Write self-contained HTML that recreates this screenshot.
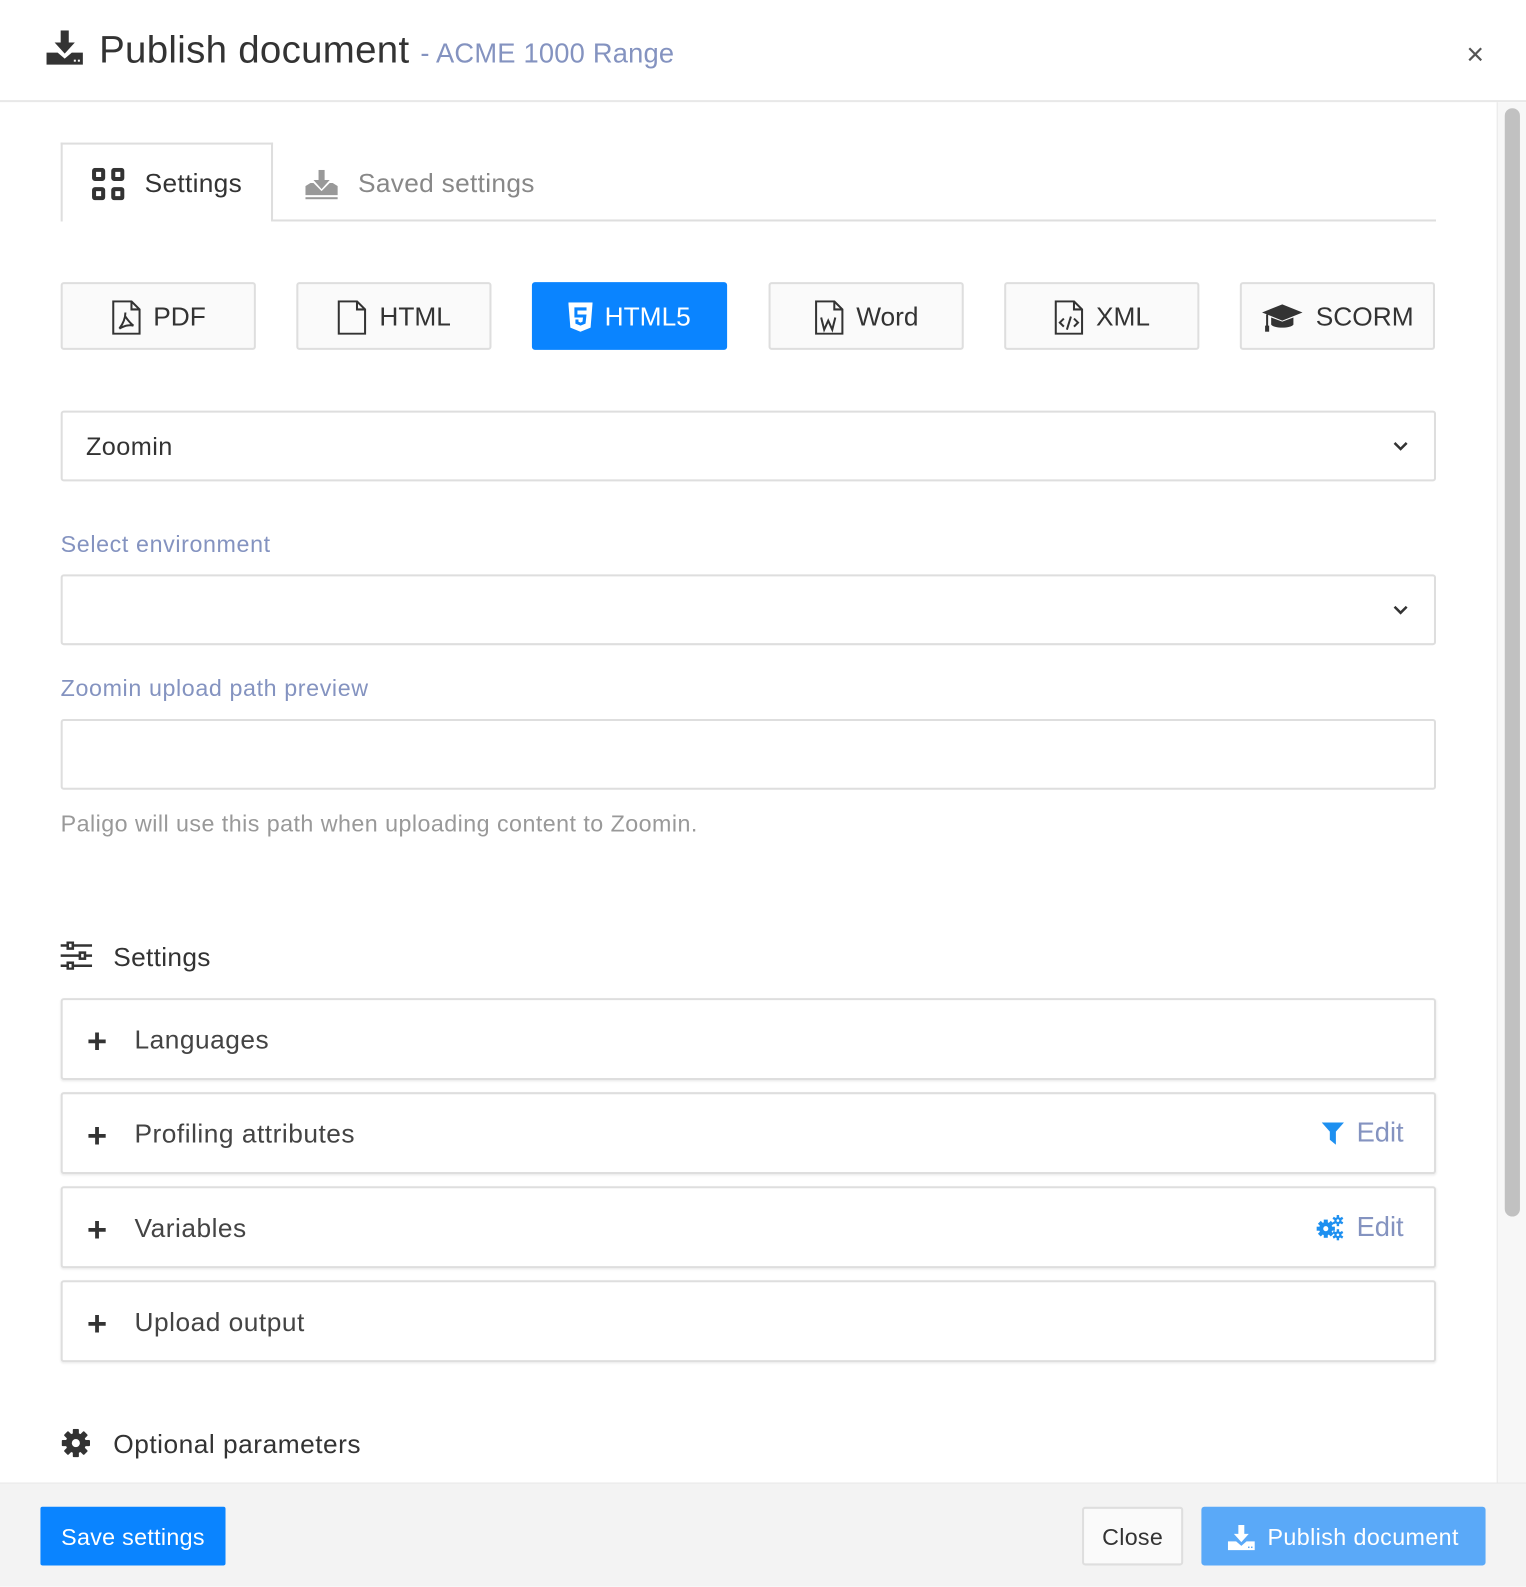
<!DOCTYPE html>
<html><head><meta charset="utf-8"><style>
html,body{margin:0;padding:0;background:#fff;overflow:hidden;width:1526px;height:1586px}
#w{position:absolute;left:0;top:0;width:1509px;height:1568px;transform:scale(1.01127);transform-origin:0 0;font-family:"Liberation Sans",sans-serif;color:#333}
.a{position:absolute}
.box{position:absolute;border:2px solid #dedede;border-radius:3px;box-sizing:border-box;background:#fff}
.fb{position:absolute;top:279px;width:193px;height:67px;border:2px solid #dedede;border-radius:3px;box-sizing:border-box;background:#fafafa;display:flex;align-items:center;justify-content:center;font-size:26px;color:#333;gap:12px;padding-top:2px}
.lbl{position:absolute;left:60px;font-size:23px;color:#8493c0;letter-spacing:.6px}
.acc{position:absolute;left:60px;width:1360px;height:81px;border:2px solid #dedede;border-radius:3px;box-sizing:border-box;box-shadow:0 1px 2px rgba(0,0,0,.08)}
.acc .p{position:absolute;left:24px;top:24px;font-size:34px;line-height:34px;font-weight:bold;color:#333}
.acc .t{position:absolute;left:71px;top:24px;font-size:26px;color:#444;letter-spacing:.5px}
.edit{position:absolute;right:30px;top:23px;font-size:27px;color:#8493c0;display:flex;align-items:center;gap:12px}
</style></head><body><div id="w">
<svg class="a" style="left:46px;top:30px" width="36" height="34" viewBox="0 0 36 34"><path d="M14 0h8v12h6l-10 11-10-11h6z" fill="#333"/><path d="M0 22h11l7 6 7-6h11v12H0z" fill="#333"/><rect x="27" y="29" width="2" height="2" fill="#fff"/><rect x="31" y="29" width="2" height="2" fill="#fff"/></svg>
<div class="a" style="left:98px;top:29px;font-size:38px;color:#333;white-space:nowrap;letter-spacing:.3px">Publish document <span style="font-size:27px;color:#8493c0;letter-spacing:.2px">- ACME 1000 Range</span></div>
<div class="a" style="left:1450px;top:38px;font-size:30px;color:#555">×</div>
<div class="a" style="left:0;top:99px;width:1509px;height:2px;background:#e8e8e8"></div>
<div class="a" style="left:1480px;top:101px;width:29px;height:1365px;background:#f7f7f7;border-left:1px solid #e8e8e8"></div>
<div class="a" style="left:1488px;top:107px;width:15px;height:1096px;background:#c1c1c1;border-radius:8px"></div>
<div class="a" style="left:269px;top:217px;width:1151px;height:2px;background:#dedede"></div>
<div class="a" style="left:60px;top:141px;width:210px;height:78px;border:2px solid #dedede;border-bottom:none;box-sizing:border-box;background:#fff"></div>
<svg class="a" style="left:91px;top:166px" width="32" height="32" viewBox="0 0 32 32" fill="none" stroke="#333" stroke-width="4"><rect x="2" y="2" width="9" height="9" rx="1"/><rect x="21" y="2" width="9" height="9" rx="1"/><rect x="2" y="21" width="9" height="9" rx="1"/><rect x="21" y="21" width="9" height="9" rx="1"/></svg>
<div class="a" style="left:143px;top:166px;font-size:26px;color:#333;letter-spacing:.3px">Settings</div>
<svg class="a" style="left:302px;top:168px" width="32" height="30" viewBox="0 0 32 30" fill="#999"><path d="M13 0h6v10h5l-8 9-8-9h5z"/><path d="M0 16l5-3h3l8 8 8-8h3l5 3v9H0z"/><rect x="0" y="27" width="32" height="2"/></svg>
<div class="a" style="left:354px;top:166px;font-size:26px;color:#888;letter-spacing:.3px">Saved settings</div>
<div class="fb" style="left:60px"><svg width="30" height="34" viewBox="0 0 30 34" fill="none" stroke="#333" stroke-width="2"><path d="M2 1h18l8 8v24H2z"/><path d="M20 1v8h8"/><path d="M8 28c3-4 6-10 6-16M8 28c5-3 10-4 14-3M14 16c2 3 4 6 8 9"/></svg><span>PDF</span></div>
<div class="fb" style="left:293px"><svg width="30" height="34" viewBox="0 0 30 34" fill="none" stroke="#333" stroke-width="2"><path d="M2 1h18l8 8v24H2z"/><path d="M20 1v8h8"/></svg><span>HTML</span></div>
<div class="fb" style="left:526px;background:#0a84ff;border-color:#0a84ff;color:#fff"><svg width="24" height="30" viewBox="0 0 24 30"><path d="M0 0h24l-2 25-10 4-10-4z" fill="#fff"/><path d="M6 5h12v3H9v4h9l-1 9-5 2-5-2v-4h3v2l2 1 2-1 .5-4H6z" fill="#0a84ff"/></svg><span>HTML5</span></div>
<div class="fb" style="left:760px"><svg width="30" height="34" viewBox="0 0 30 34" fill="none" stroke="#333" stroke-width="2"><path d="M2 1h18l8 8v24H2z"/><path d="M20 1v8h8"/><path d="M7 17l3 12 4-9 4 9 3-12"/></svg><span>Word</span></div>
<div class="fb" style="left:993px"><svg width="30" height="34" viewBox="0 0 30 34" fill="none" stroke="#333" stroke-width="2"><path d="M2 1h18l8 8v24H2z"/><path d="M20 1v8h8"/><path d="M10 18l-4 4 4 4M20 18l4 4-4 4M17 16l-4 13"/></svg><span>XML</span></div>
<div class="fb" style="left:1226px"><svg width="42" height="30" viewBox="0 0 42 30" fill="#333"><path d="M21 2L1 10l20 8 20-8z"/><path d="M10 15v7c3 4 19 4 22 0v-7l-11 4z"/><path d="M5 12v12h2V12z"/><rect x="4" y="23" width="4" height="6"/></svg><span>SCORM</span></div>
<div class="box" style="left:60px;top:406px;width:1360px;height:70px"></div>
<div class="a" style="left:85px;top:428px;font-size:25px;color:#333;letter-spacing:.4px">Zoomin</div>
<svg class="a" style="left:1377px;top:436px" width="16" height="10" viewBox="0 0 16 10" fill="none" stroke="#333" stroke-width="2.5"><path d="M2 2l6 6 6-6"/></svg>
<div class="lbl" style="top:525px">Select environment</div>
<div class="box" style="left:60px;top:568px;width:1360px;height:70px"></div>
<svg class="a" style="left:1377px;top:598px" width="16" height="10" viewBox="0 0 16 10" fill="none" stroke="#333" stroke-width="2.5"><path d="M2 2l6 6 6-6"/></svg>
<div class="lbl" style="top:667px">Zoomin upload path preview</div>
<div class="box" style="left:60px;top:711px;width:1360px;height:70px"></div>
<div class="a" style="left:60px;top:801px;font-size:23px;color:#999;letter-spacing:.45px">Paligo will use this path when uploading content to Zoomin.</div>
<svg class="a" style="left:59px;top:931px" width="33" height="28" viewBox="0 0 33 28" fill="none" stroke="#333" stroke-width="2.5"><path d="M1 4h31M1 14h31M1 24h31"/><rect x="8" y="1" width="5" height="6" fill="#fff"/><rect x="20" y="11" width="5" height="6" fill="#fff"/><rect x="8" y="21" width="5" height="6" fill="#fff"/></svg>
<div class="a" style="left:112px;top:931px;font-size:26px;color:#333;letter-spacing:.3px">Settings</div>
<div class="acc" style="top:987px"><div class="p">+</div><div class="t">Languages</div></div>
<div class="acc" style="top:1080px"><div class="p">+</div><div class="t">Profiling attributes</div><div class="edit"><svg width="22" height="22" viewBox="0 0 22 22" fill="#1e90f0"><path d="M0 0h22l-8 9v13l-6-5V9z"/></svg>Edit</div></div>
<div class="acc" style="top:1173px"><div class="p">+</div><div class="t">Variables</div><div class="edit"><svg width="28" height="26" viewBox="0 0 28 26" fill="#1e90f0"><g transform="translate(10 14)"><circle r="6.5"/><rect x="-2" y="-9" width="4" height="18"/><rect x="-2" y="-9" width="4" height="18" transform="rotate(45)"/><rect x="-2" y="-9" width="4" height="18" transform="rotate(90)"/><rect x="-2" y="-9" width="4" height="18" transform="rotate(135)"/><circle r="2.5" fill="#fff"/></g><g transform="translate(22 6)"><circle r="3.5"/><rect x="-1.2" y="-5.5" width="2.4" height="11"/><rect x="-1.2" y="-5.5" width="2.4" height="11" transform="rotate(60)"/><rect x="-1.2" y="-5.5" width="2.4" height="11" transform="rotate(120)"/><circle r="1.3" fill="#fff"/></g><g transform="translate(22 20)"><circle r="3.5"/><rect x="-1.2" y="-5.5" width="2.4" height="11"/><rect x="-1.2" y="-5.5" width="2.4" height="11" transform="rotate(60)"/><rect x="-1.2" y="-5.5" width="2.4" height="11" transform="rotate(120)"/><circle r="1.3" fill="#fff"/></g></svg>Edit</div></div>
<div class="acc" style="top:1266px"><div class="p">+</div><div class="t">Upload output</div></div>
<svg class="a" style="left:61px;top:1413px" width="28" height="28" viewBox="0 0 28 28"><g fill="#333"><circle cx="14" cy="14" r="10"/><rect x="11" y="0" width="6" height="28" rx="1"/><rect x="11" y="0" width="6" height="28" rx="1" transform="rotate(45 14 14)"/><rect x="11" y="0" width="6" height="28" rx="1" transform="rotate(90 14 14)"/><rect x="11" y="0" width="6" height="28" rx="1" transform="rotate(135 14 14)"/></g><circle cx="14" cy="14" r="4" fill="#fff"/></svg>
<div class="a" style="left:112px;top:1413px;font-size:26px;color:#333;letter-spacing:.5px">Optional parameters</div>
<div class="a" style="left:0;top:1466px;width:1509px;height:102px;background:#f3f3f3;border-top:1px solid #e8e8e8"></div>
<div class="a" style="left:40px;top:1490px;width:183px;height:58px;background:#0a84ff;border-radius:2px;color:#fff;font-size:23px;display:flex;align-items:center;justify-content:center;padding-top:2px;box-sizing:border-box;letter-spacing:.3px">Save settings</div>
<div class="a" style="left:1070px;top:1490px;width:100px;height:58px;background:#fafafa;border:2px solid #dedede;box-sizing:border-box;border-radius:3px;color:#333;font-size:23px;display:flex;align-items:center;justify-content:center;padding-top:2px;letter-spacing:.3px">Close</div>
<div class="a" style="left:1188px;top:1490px;width:281px;height:58px;background:#5aa9f8;border-radius:3px;color:#fff;font-size:23px;display:flex;align-items:center;justify-content:center;gap:12px;padding-top:2px;box-sizing:border-box;letter-spacing:.4px"><svg width="27" height="25" viewBox="0 0 36 34"><path d="M14 0h8v12h6l-10 11-10-11h6z" fill="#fff"/><path d="M0 22h11l7 6 7-6h11v12H0z" fill="#fff"/><rect x="27" y="29" width="2" height="2" fill="#5aa9f8"/><rect x="31" y="29" width="2" height="2" fill="#5aa9f8"/></svg>Publish document</div>
</div></body></html>
